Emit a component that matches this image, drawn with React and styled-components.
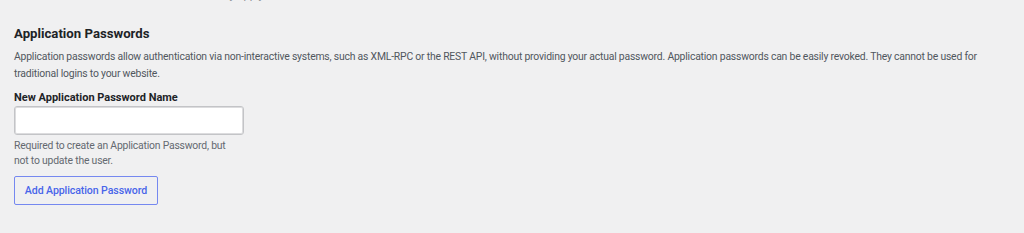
import styled, { createGlobalStyle } from 'styled-components';

const Global = createGlobalStyle`
  html, body {
    margin: 0;
    padding: 0;
    background: #f0f0f1;
  }
  body {
    font-family: Roboto, "Liberation Sans", Arial, sans-serif;
    color: #1d2327;
  }
`;

const Page = styled.div`
  padding: 0 14px;
  height: 233px;
  overflow: hidden;
`;

const CutLine = styled.div`
  height: 0;
  margin-left: 200px;
  position: relative;
  top: -10px;
  font-size: 11px;
  line-height: 12px;
  color: #8c8f94;
`;

const Heading = styled.h2`
  margin: 26px 0 0;
  font-size: 13.2px;
  line-height: 16px;
  font-weight: 700;
  color: #1d2327;
`;

const Description = styled.p`
  margin: 6px 0 0;
  font-size: 10.4px;
  line-height: 17px;
  letter-spacing: -0.2px;
  color: #50575e;
  max-width: 985px;
`;

const Label = styled.label`
  display: block;
  margin-top: 9px;
  font-size: 11px;
  line-height: 14px;
  font-weight: 700;
  color: #1d2327;
`;

const Input = styled.input`
  display: block;
  box-sizing: border-box;
  margin-top: 1px;
  width: 230px;
  height: 29px;
  background: #fff;
  border: 1px solid #c3c4c7;
  border-radius: 3px;
  box-shadow: inset 0 0 0 1px #dcdcde;
  font-family: inherit;
`;

const Help = styled.p`
  margin: 3px 0 0;
  width: 224px;
  font-size: 10.4px;
  line-height: 15px;
  letter-spacing: -0.2px;
  color: #646970;
`;

const Button = styled.button`
  display: block;
  box-sizing: border-box;
  margin-top: 8px;
  width: 144px;
  height: 29px;
  padding: 0;
  background: transparent;
  border: 1px solid #7588f0;
  border-radius: 2px;
  color: #4865ea;
  font-family: inherit;
  font-size: 10.6px;
  font-weight: 500;
  letter-spacing: -0.1px;
  white-space: nowrap;
  cursor: pointer;
`;

export default function App() {
  return (
    <Page>
      <Global />
      <CutLine>may apply</CutLine>
      <Heading>Application Passwords</Heading>
      <Description>
        Application passwords allow authentication via non-interactive systems, such as XML-RPC or the REST API, without
        providing your actual password. Application passwords can be easily revoked. They cannot be used for traditional
        logins to your website.
      </Description>
      <Label htmlFor="new_application_password_name">New Application Password Name</Label>
      <Input id="new_application_password_name" type="text" />
      <Help>Required to create an Application Password, but not to update the user.</Help>
      <Button type="button">Add Application Password</Button>
    </Page>
  );
}
